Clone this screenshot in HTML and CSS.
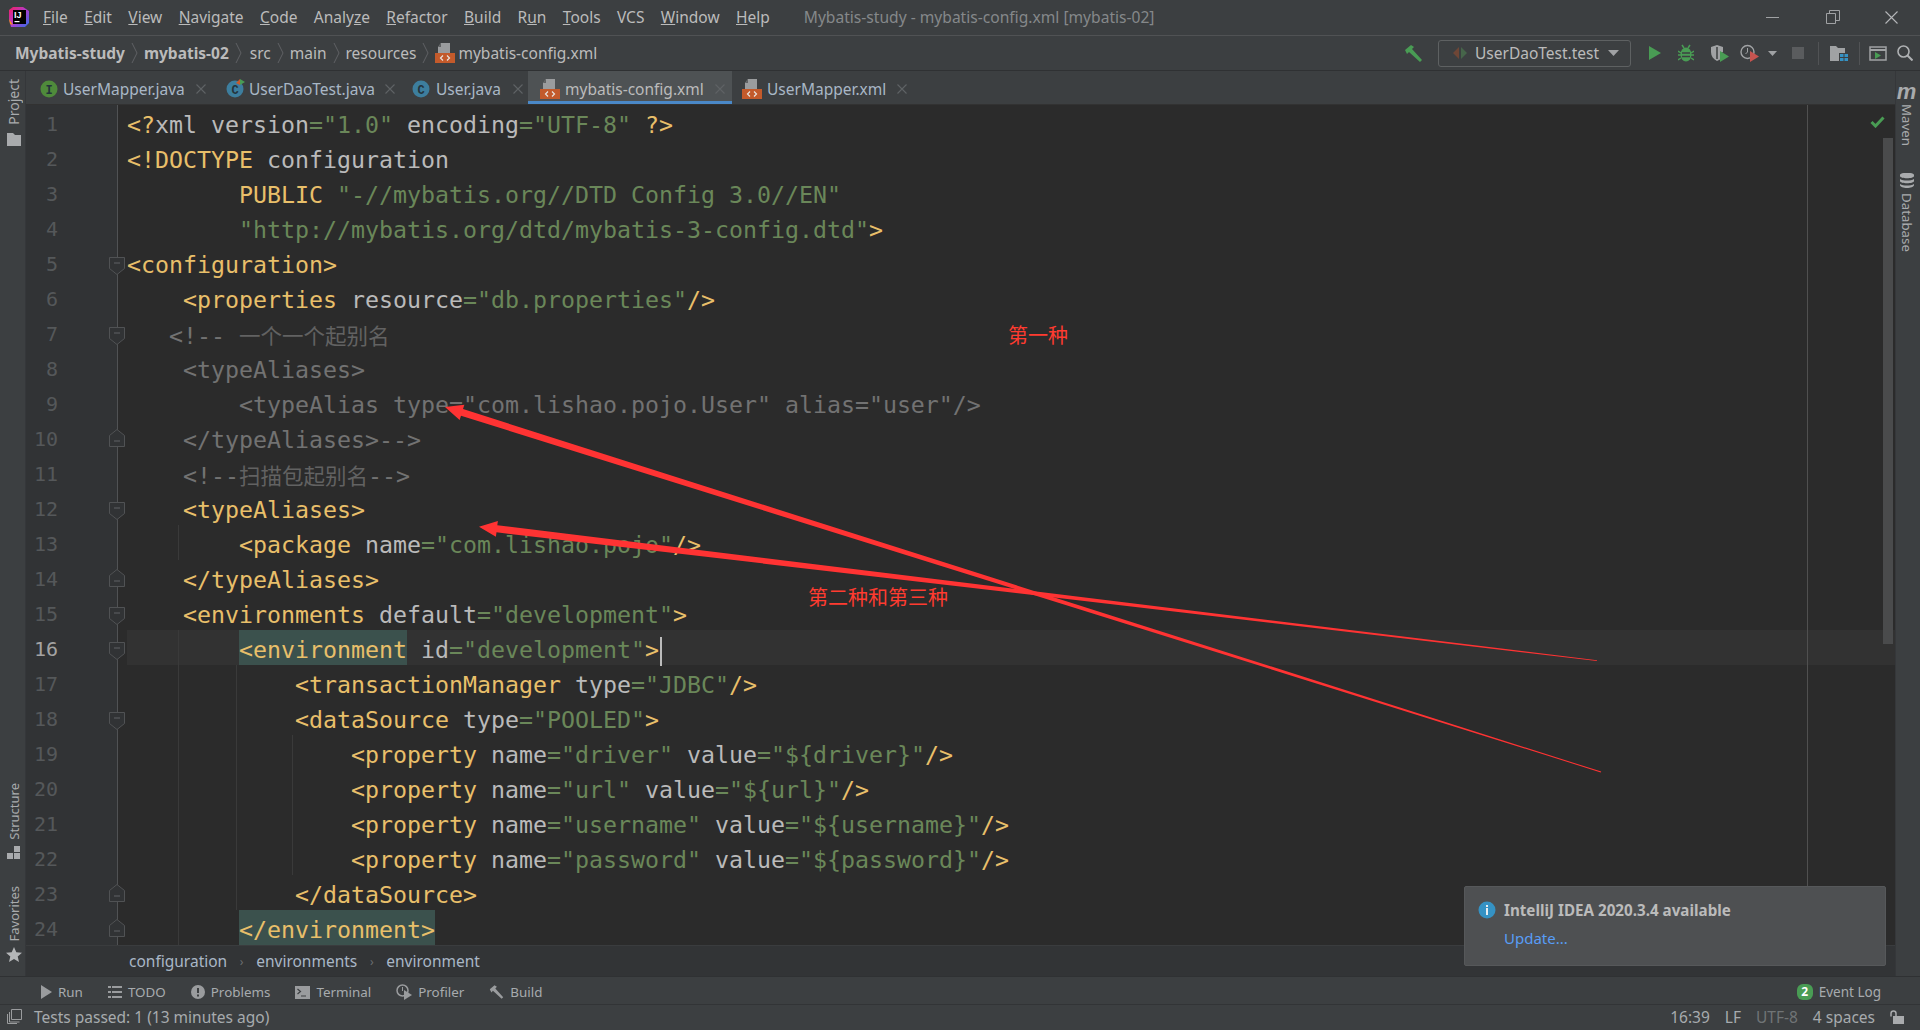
FILE: index.html
```html
<!DOCTYPE html>
<html lang="en">
<head>
    <meta charset="UTF-8">
    <title>Mybatis-study - mybatis-config.xml [mybatis-02]</title>
    <link rel="stylesheet" href="styles.css">
</head>
<body>
    <!-- Shared icons -->
    <svg class="defs" width="0" height="0">
        <symbol id="xml" viewBox="0 0 20 20">
            <path d="M6 0h9v10H3V4z" fill="#9a9c9e"/>
            <path d="M6 0v4H3z" fill="#5f6163"/>
            <rect y="10" width="20" height="10" fill="#c35a2b"/>
            <path d="M8 12.5 5.5 15 8 17.5M12 12.5l2.5 2.5-2.5 2.5" fill="none" stroke="#e9e4df" stroke-width="1.2"/>
        </symbol>
        <symbol id="x" viewBox="0 0 10 10">
            <path d="M.5.5l9 9M9.5.5l-9 9" stroke="#5f6365" stroke-width="1.1"/>
        </symbol>
        <symbol id="chev" viewBox="0 0 7 20">
            <path d="M1 0l5 10-5 10" fill="none" stroke="#5f6264"/>
        </symbol>
        <symbol id="fold-open" viewBox="0 0 16 18">
            <path d="M.5.5h15v11L8 17.5.5 11.5z" fill="#313335" stroke="#505254"/>
            <path d="M5 6h6" stroke="#606366"/>
        </symbol>
        <symbol id="fold-close" viewBox="0 0 16 18">
            <path d="M.5 17.5h15v-11L8 .5.5 6.5z" fill="#313335" stroke="#505254"/>
            <path d="M5 12h6" stroke="#606366"/>
        </symbol>
        <symbol id="hammer" viewBox="0 0 19 17">
            <path d="M1 5 7 0l3 2-2 2 10 11-2 2L5 7 3 9z" fill="currentColor"/>
        </symbol>
    </svg>

    <header class="title-bar">
        <svg class="logo" width="20" height="20" viewBox="0 0 20 20">
            <defs>
                <linearGradient id="logo-fill" x1="0" y1="0" x2="1" y2="1">
                    <stop offset="0" stop-color="#f5205f"/>
                    <stop offset=".5" stop-color="#b13bd0"/>
                    <stop offset="1" stop-color="#2f6fe8"/>
                </linearGradient>
            </defs>
            <path d="M4 0h10l6 4v12l-4 4H2L0 12V3z" fill="url(#logo-fill)"/>
            <path d="M0 12l4 6-3-1z" fill="#f7941d"/>
            <rect x="4" y="3" width="13" height="14" fill="#000"/>
            <text x="5" y="11" class="logo-text">IJ</text>
            <rect x="5.5" y="14" width="5" height="1.2" fill="#fff"/>
        </svg>
        <nav class="menu">
            <span><u>F</u>ile</span>
            <span><u>E</u>dit</span>
            <span><u>V</u>iew</span>
            <span><u>N</u>avigate</span>
            <span><u>C</u>ode</span>
            <span>Analy<u>z</u>e</span>
            <span><u>R</u>efactor</span>
            <span><u>B</u>uild</span>
            <span>R<u>u</u>n</span>
            <span><u>T</u>ools</span>
            <span>VCS</span>
            <span><u>W</u>indow</span>
            <span><u>H</u>elp</span>
        </nav>
        <div class="window-title">Mybatis-study - mybatis-config.xml [mybatis-02]</div>
        <div class="window-buttons">
            <svg width="13" height="13" viewBox="0 0 13 13"><path d="M0 6.5h13" stroke="#a0a2a4"/></svg>
            <svg width="14" height="14" viewBox="0 0 14 14"><path d="M.5 3.5h9v10h-9zM3.5 3.5v-3h10v10h-4" fill="none" stroke="#a0a2a4"/></svg>
            <svg width="13" height="13" viewBox="0 0 13 13"><path d="M.5.5l12 12M12.5.5l-12 12" stroke="#b5b7b9" stroke-width="1.1"/></svg>
        </div>
    </header>

    <div class="nav-bar">
        <div class="crumbs">
            <b>Mybatis-study</b><svg class="chev" width="7" height="20"><use href="#chev"/></svg>
            <b>mybatis-02</b><svg class="chev chev-wide" width="7" height="20"><use href="#chev"/></svg>
            <span>src</span><svg class="chev" width="7" height="20"><use href="#chev"/></svg>
            <span>main</span><svg class="chev" width="7" height="20"><use href="#chev"/></svg>
            <span>resources</span><svg class="chev" width="7" height="20"><use href="#chev"/></svg>
            <svg class="file-icon" width="20" height="20"><use href="#xml"/></svg>
            <span>mybatis-config.xml</span>
        </div>
        <div class="run-tools">
            <svg class="hammer" width="19" height="17"><use href="#hammer"/></svg>
            <div class="run-config">
                <svg width="14" height="12" viewBox="0 0 14 12"><path d="M6 0v12L0 6z" fill="#6e4636"/><path d="M8 0v12l6-6z" fill="#46654a"/></svg>
                <span>UserDaoTest.test</span>
                <svg width="11" height="6" viewBox="0 0 11 6"><path d="M0 0h11L5.5 6z" fill="#a0a2a4"/></svg>
            </div>
            <svg class="t-play" width="12" height="14" viewBox="0 0 12 14"><path d="M0 0l12 7-12 7z" fill="#499c54"/></svg>
            <svg class="t-bug" width="16" height="18" viewBox="0 0 16 18">
                <path d="M4 1l2 3M12 1l-2 3M0 7l3 2M16 7l-3 2M0 11h3M16 11h-3M0 16l3-2M16 16l-3-2" stroke="#499c54" stroke-width="1.5"/>
                <ellipse cx="8" cy="10.5" rx="5.5" ry="7" fill="#499c54"/>
                <path d="M4 9h8M4 12.5h8" stroke="#3c3f41" stroke-width="1.3"/>
            </svg>
            <svg class="t-cover" width="19" height="17" viewBox="0 0 19 17">
                <path d="M1 2l6-2 6 2v5l-2 1v6l-4 2c-4-2-6-5-6-9z" fill="#a0a2a4"/>
                <path d="M7 2v12" stroke="#3c3f41" stroke-width="1.5"/>
                <path d="M10 6l9 5.5-9 5.5z" fill="#499c54"/>
            </svg>
            <svg class="t-profile" width="19" height="18" viewBox="0 0 19 18">
                <circle cx="7.5" cy="8" r="6.5" fill="none" stroke="#a0a2a4" stroke-width="1.4"/>
                <path d="M7.5 4v4l-2 2" fill="none" stroke="#a0a2a4"/>
                <path d="M10 7l9 5.5-9 5.5z" fill="#c75450"/>
            </svg>
            <svg class="t-caret" width="9" height="5" viewBox="0 0 9 5"><path d="M0 0h9L4.5 5z" fill="#a0a2a4"/></svg>
            <div class="t-stop"></div>
            <div class="t-sep"></div>
            <svg class="t-folder" width="18" height="15" viewBox="0 0 18 15">
                <path d="M0 0h6l2 2h7v5H9v8H0z" fill="#a0a2a4"/>
                <path d="M10 8h3.5v3H10zM14.5 8H18v3h-3.5zM10 12h3.5v3H10zM14.5 12H18v3h-3.5z" fill="#3592c4"/>
            </svg>
            <div class="t-sep t-sep2"></div>
            <svg class="t-term" width="18" height="15" viewBox="0 0 18 15">
                <path d="M1 1h16v13H1z" fill="none" stroke="#a0a2a4" stroke-width="1.5"/>
                <path d="M1 4h16" stroke="#a0a2a4" stroke-width="2"/>
                <path d="M6 6l6 3.5-6 3.5z" fill="#499c54"/>
            </svg>
            <svg class="t-search" width="16" height="16" viewBox="0 0 16 16">
                <circle cx="6.5" cy="6.5" r="5.5" fill="none" stroke="#afb1b3" stroke-width="1.6"/>
                <path d="M10.5 10.5l5 5" stroke="#afb1b3" stroke-width="2"/>
            </svg>
        </div>
    </div>

    <div class="workspace">
        <aside class="stripe stripe-left">
            <div class="stripe-group stripe-top">
                <span class="vert project">Project</span>
                <svg width="14" height="13" viewBox="0 0 14 13"><path d="M0 0h6l2 2h6v11H0z" fill="#a9abad"/></svg>
            </div>
            <div class="stripe-group">
                <span class="vert">Structure</span>
                <svg width="13" height="13" viewBox="0 0 13 13"><path d="M7 0h6v6H7zM0 7h6v6H0zM7 7h6v6H7z" fill="#a9abad"/></svg>
                <span class="vert favorites">Favorites</span>
                <svg width="16" height="16" viewBox="0 0 16 16"><path d="M8 0l2.3 5.300 5.700.5-4.300 3.700 1.300 5.500L8 12.100 3 15l1.300-5.500L0 5.800l5.700-.5z" fill="#b4b6b8"/></svg>
            </div>
        </aside>

        <main class="center">
            <div class="tabs">
                <div class="tab tab-1">
                    <svg width="18" height="18" viewBox="0 0 18 18"><circle cx="9" cy="9" r="8.5" fill="#4f8b3b"/><text x="9" y="13.5" class="badge-text">I</text></svg>
                    <span>UserMapper.java</span>
                    <svg class="close" width="10" height="10"><use href="#x"/></svg>
                </div>
                <div class="tab tab-2">
                    <svg width="19" height="19" viewBox="0 0 19 19"><circle cx="9" cy="10" r="8.5" fill="#3d7e9e"/><text x="9" y="14.5" class="badge-text">C</text><path d="M10 4l4-4v6z" fill="#c75a2b"/><path d="M14 0l5 3-5 3z" fill="#499c54"/></svg>
                    <span>UserDaoTest.java</span>
                    <svg class="close" width="10" height="10"><use href="#x"/></svg>
                </div>
                <div class="tab tab-3">
                    <svg width="18" height="18" viewBox="0 0 18 18"><circle cx="9" cy="9" r="8.5" fill="#3d7e9e"/><text x="9" y="13.5" class="badge-text">C</text></svg>
                    <span>User.java</span>
                    <svg class="close" width="10" height="10"><use href="#x"/></svg>
                </div>
                <div class="tab tab-4 active">
                    <svg width="20" height="20"><use href="#xml"/></svg>
                    <span>mybatis-config.xml</span>
                    <svg class="close" width="10" height="10"><use href="#x"/></svg>
                </div>
                <div class="tab tab-5">
                    <svg width="20" height="20"><use href="#xml"/></svg>
                    <span>UserMapper.xml</span>
                    <svg class="close" width="10" height="10"><use href="#x"/></svg>
                </div>
            </div>

            <section class="editor">
                <div class="line"><div class="gutter">1</div><div class="code"><span class="t">&lt;?</span><span class="a">xml version</span><span class="v">="1.0"</span> <span class="a">encoding</span><span class="v">="UTF-8"</span> <span class="t">?&gt;</span></div></div>
                <div class="line"><div class="gutter">2</div><div class="code"><span class="t">&lt;!DOCTYPE</span> <span class="a">configuration</span></div></div>
                <div class="line"><div class="gutter">3</div><div class="code">        <span class="t">PUBLIC</span> <span class="v">"-//mybatis.org//DTD Config 3.0//EN"</span></div></div>
                <div class="line"><div class="gutter">4</div><div class="code">        <span class="v">"http://mybatis.org/dtd/mybatis-3-config.dtd"</span><span class="t">&gt;</span></div></div>
                <div class="line"><div class="gutter">5<svg class="fold open" width="16" height="18"><use href="#fold-open"/></svg></div><div class="code"><span class="t">&lt;configuration&gt;</span></div></div>
                <div class="line"><div class="gutter">6</div><div class="code">    <span class="t">&lt;properties</span> <span class="a">resource</span><span class="v">="db.properties"</span><span class="t">/&gt;</span></div></div>
                <div class="line"><div class="gutter">7<svg class="fold open" width="16" height="18"><use href="#fold-open"/></svg></div><div class="code">   <span class="c">&lt;!-- <span class="cjk">一个一个起别名</span></span></div></div>
                <div class="line"><div class="gutter">8</div><div class="code">    <span class="c">&lt;typeAliases&gt;</span></div></div>
                <div class="line"><div class="gutter">9</div><div class="code">        <span class="c">&lt;typeAlias type="com.lishao.pojo.User" alias="user"/&gt;</span></div></div>
                <div class="line"><div class="gutter">10<svg class="fold close-mark" width="16" height="18"><use href="#fold-close"/></svg></div><div class="code">    <span class="c">&lt;/typeAliases&gt;--&gt;</span></div></div>
                <div class="line"><div class="gutter">11</div><div class="code">    <span class="c">&lt;!--<span class="cjk">扫描包起别名</span>--&gt;</span></div></div>
                <div class="line"><div class="gutter">12<svg class="fold open" width="16" height="18"><use href="#fold-open"/></svg></div><div class="code">    <span class="t">&lt;typeAliases&gt;</span></div></div>
                <div class="line"><div class="gutter">13</div><div class="code">        <span class="t">&lt;package</span> <span class="a">name</span><span class="v">="com.lishao.pojo"</span><span class="t">/&gt;</span></div></div>
                <div class="line"><div class="gutter">14<svg class="fold close-mark" width="16" height="18"><use href="#fold-close"/></svg></div><div class="code">    <span class="t">&lt;/typeAliases&gt;</span></div></div>
                <div class="line"><div class="gutter">15<svg class="fold open" width="16" height="18"><use href="#fold-open"/></svg></div><div class="code">    <span class="t">&lt;environments</span> <span class="a">default</span><span class="v">="development"</span><span class="t">&gt;</span></div></div>
                <div class="line current"><div class="gutter">16<svg class="fold open" width="16" height="18"><use href="#fold-open"/></svg></div><div class="code">        <span class="t match">&lt;environment</span> <span class="a">id</span><span class="v">="development"</span><span class="t">&gt;</span><span class="caret"></span></div></div>
                <div class="line"><div class="gutter">17</div><div class="code">            <span class="t">&lt;transactionManager</span> <span class="a">type</span><span class="v">="JDBC"</span><span class="t">/&gt;</span></div></div>
                <div class="line"><div class="gutter">18<svg class="fold open" width="16" height="18"><use href="#fold-open"/></svg></div><div class="code">            <span class="t">&lt;dataSource</span> <span class="a">type</span><span class="v">="POOLED"</span><span class="t">&gt;</span></div></div>
                <div class="line"><div class="gutter">19</div><div class="code">                <span class="t">&lt;property</span> <span class="a">name</span><span class="v">="driver"</span> <span class="a">value</span><span class="v">="${driver}"</span><span class="t">/&gt;</span></div></div>
                <div class="line"><div class="gutter">20</div><div class="code">                <span class="t">&lt;property</span> <span class="a">name</span><span class="v">="url"</span> <span class="a">value</span><span class="v">="${url}"</span><span class="t">/&gt;</span></div></div>
                <div class="line"><div class="gutter">21</div><div class="code">                <span class="t">&lt;property</span> <span class="a">name</span><span class="v">="username"</span> <span class="a">value</span><span class="v">="${username}"</span><span class="t">/&gt;</span></div></div>
                <div class="line"><div class="gutter">22</div><div class="code">                <span class="t">&lt;property</span> <span class="a">name</span><span class="v">="password"</span> <span class="a">value</span><span class="v">="${password}"</span><span class="t">/&gt;</span></div></div>
                <div class="line"><div class="gutter">23<svg class="fold close-mark" width="16" height="18"><use href="#fold-close"/></svg></div><div class="code">            <span class="t">&lt;/dataSource&gt;</span></div></div>
                <div class="line"><div class="gutter">24<svg class="fold close-mark" width="16" height="18"><use href="#fold-close"/></svg></div><div class="code">        <span class="t match">&lt;/environment&gt;</span></div></div>

                <!-- Indent guides, margin, inspection mark, scrollbar -->
                <div class="guide guide-a"></div>
                <div class="guide guide-b"></div>
                <div class="guide guide-c"></div>
                <div class="guide guide-d"></div>
                <div class="margin-line"></div>
                <svg class="check" width="15" height="12" viewBox="0 0 15 12"><path d="M1.5 6l4 4 8-8.5" fill="none" stroke="#499c54" stroke-width="3"/></svg>
                <div class="scroll-thumb"></div>
            </section>

            <div class="breadcrumbs">
                <span>configuration</span><i>›</i>
                <span>environments</span><i>›</i>
                <span>environment</span>
            </div>
        </main>

        <aside class="stripe stripe-right">
            <span class="maven-m">m</span>
            <span class="vert-r">Maven</span>
            <svg class="db-icon" width="14" height="15" viewBox="0 0 14 15"><path d="M0 2c0-3 14-3 14 0v1c0 3-14 3-14 0zM0 6c3 2 11 2 14 0v2c0 3-14 3-14 0zM0 11c3 2 11 2 14 0v1c0 4-14 4-14 0z" fill="#a9abad"/></svg>
            <span class="vert-r">Database</span>
        </aside>
    </div>

    <div class="tool-bar">
        <div class="tool-group">
            <div class="tool"><svg width="11" height="14" viewBox="0 0 11 14"><path d="M0 0l11 7-11 7z" fill="#9a9c9e"/></svg><span>Run</span></div>
            <div class="tool"><svg width="14" height="12" viewBox="0 0 14 12"><path d="M0 0h3v2H0zM4 0h10v2H4zM0 5h3v2H0zM4 5h10v2H4zM0 10h3v2H0zM4 10h10v2H4z" fill="#9a9c9e"/></svg><span>TODO</span></div>
            <div class="tool"><svg width="14" height="14" viewBox="0 0 14 14"><circle cx="7" cy="7" r="7" fill="#9a9c9e"/><path d="M6 3h2v5H6zM6 9.5h2v2H6z" fill="#3c3f41"/></svg><span>Problems</span></div>
            <div class="tool"><svg width="15" height="13" viewBox="0 0 15 13"><rect width="15" height="13" fill="#9a9c9e"/><path d="M2.5 3l3 2.5-3 2.5M6 10h5" fill="none" stroke="#3c3f41" stroke-width="1.2"/></svg><span>Terminal</span></div>
            <div class="tool"><svg width="16" height="16" viewBox="0 0 16 16"><circle cx="6.5" cy="6.5" r="5.5" fill="none" stroke="#9a9c9e" stroke-width="1.5"/><path d="M6.5 3v4" stroke="#9a9c9e"/><path d="M8 6l8 5-8 5z" fill="#9a9c9e"/></svg><span>Profiler</span></div>
            <div class="tool"><svg class="hammer-gray" width="15" height="14"><use href="#hammer"/></svg><span>Build</span></div>
        </div>
        <div class="event-log">
            <span class="event-badge">2</span>
            <span>Event Log</span>
        </div>
    </div>

    <footer class="status-bar">
        <svg width="15" height="15" viewBox="0 0 15 15"><path d="M4.5.5h10v10h-10z" fill="none" stroke="#9a9c9e"/><path d="M2.5 3v10h10M.5 5v9.5H10" fill="none" stroke="#9a9c9e"/></svg>
        <span class="status-msg">Tests passed: 1 (13 minutes ago)</span>
        <div class="status-right">
            <span>16:39</span>
            <span>LF</span>
            <span class="s-enc">UTF-8</span>
            <span>4 spaces</span>
            <svg width="14" height="14" viewBox="0 0 14 14"><path d="M1 6.5V3.5a2.5 2.5 0 0 1 5 0V6" fill="none" stroke="#a9abad" stroke-width="1.5"/><rect x="3" y="6" width="11" height="8" fill="#a9abad"/></svg>
        </div>
    </footer>

    <!-- Update popup and the red notes drawn over the screenshot -->
    <div class="notification">
        <svg width="18" height="18" viewBox="0 0 18 18"><circle cx="9" cy="9" r="8.5" fill="#3592c4"/><path d="M8 7h2v7H8zM8 4h2v2H8z" fill="#e8eef2"/></svg>
        <div>
            <div class="notification-title">IntelliJ IDEA 2020.3.4 available</div>
            <a class="notification-link">Update...</a>
        </div>
    </div>

    <svg class="arrows" width="1920" height="1030">
        <polygon points="445,407 464.4,404.8 463,409.1 1601.2,771.6 1600.8,772.4 461,415.7 459.6,420" fill="#ff3333"/>
        <polygon points="479,526.7 497.9,520.9 497.3,525.3 1597,660.3 1596.9,661.1 496.5,532.3 495.9,536.7" fill="#ff3333"/>
    </svg>
    <span class="note note-one">第一种</span>
    <span class="note note-two">第二种和第三种</span>
</body>
</html>
```

FILE: styles.css
```css
/* Reset */
* {
    box-sizing: border-box;
}

body {
    margin: 0;
    width: 1920px;
    height: 1030px;
    overflow: hidden;
    position: relative;
    display: flex;
    flex-direction: column;
    background-color: #3c3f41;
    color: #bbbbbb;
    font-family: "Noto Sans", Arial, sans-serif;
    font-size: 15px;
}

svg {
    display: block;
    flex-shrink: 0;
}

.defs {
    position: absolute;
}

/* Title bar */
.title-bar {
    height: 36px;
    display: flex;
    align-items: center;
    border-bottom: 1px solid #505254;
}

.logo {
    margin-left: 9px;
}

.logo-text {
    font-family: "Liberation Sans", sans-serif;
    font-size: 9px;
    font-weight: bold;
    fill: #fff;
}

.menu {
    display: flex;
    gap: 16.4px;
    margin-left: 14px;
    font-size: 15.5px;
    color: #bbbbbb;
}

.window-title {
    margin-left: 34px;
    font-size: 15.6px;
    color: #85888a;
}

.window-buttons {
    margin-left: auto;
    display: flex;
    align-items: center;
    gap: 45px;
    padding-right: 22px;
}

.window-buttons svg:first-child {
    margin-right: 2px;
}

/* Navigation bar */
.nav-bar {
    height: 36px;
    display: flex;
    align-items: center;
    justify-content: space-between;
    border-bottom: 1px solid #2f3133;
    padding-left: 15px;
}

.crumbs {
    display: flex;
    align-items: center;
    font-size: 15.5px;
}

.crumbs b {
    font-weight: 700;
}

.chev {
    margin: 0 6px;
}

.chev-wide {
    margin-right: 8px;
}

.file-icon {
    margin-right: 3px;
}

.run-tools {
    display: flex;
    align-items: center;
    padding-right: 7px;
}

.hammer {
    color: #499c54;
}

.run-config {
    width: 193px;
    height: 27px;
    margin-left: 15px;
    display: flex;
    align-items: center;
    padding: 0 12px 0 14px;
    border: 1px solid #5e6162;
    border-radius: 3px;
}

.run-config span {
    margin-left: 8px;
    margin-right: 9px;
    font-size: 15.5px;
    white-space: nowrap;
}

.t-play { margin-left: 18px; }
.t-bug { margin-left: 17px; }
.t-cover { margin-left: 16px; }
.t-profile { margin-left: 11px; }
.t-caret { margin-left: 9px; }
.t-folder { margin-left: 11px; }
.t-term { margin-left: 9px; }
.t-search { margin-left: 10px; }

.t-stop {
    width: 12px;
    height: 12px;
    margin-left: 15px;
    background-color: #5a5c5e;
}

.t-sep {
    width: 1px;
    height: 23px;
    margin-left: 14px;
    background-color: #515355;
}

.t-sep2 {
    margin-left: 11px;
}

/* Main area */
.workspace {
    height: 905px;
    display: flex;
}

.stripe {
    flex-shrink: 0;
    display: flex;
    flex-direction: column;
    align-items: center;
}

.stripe-left {
    width: 26px;
    justify-content: space-between;
    padding: 8px 0 13px 2px;
    border-right: 1px solid #35373a;
}

.stripe-group {
    display: flex;
    flex-direction: column;
    align-items: center;
    gap: 6px;
}

.stripe-top {
    gap: 8px;
}

.vert {
    writing-mode: vertical-rl;
    transform: rotate(180deg);
    font-size: 13px;
    line-height: 18px;
    color: #a9abad;
}

.project {
    font-size: 14px;
}

.favorites {
    margin-top: 21px;
}

.center {
    width: 1869px;
    display: flex;
    flex-direction: column;
}

.stripe-right {
    width: 25px;
    padding: 9px 3px 0 0;
    border-left: 1px solid #35373a;
}

.maven-m {
    font-family: "Liberation Sans", sans-serif;
    font-size: 22px;
    font-weight: bold;
    font-style: italic;
    line-height: 24px;
    color: #a9abad;
}

.vert-r {
    writing-mode: vertical-rl;
    font-size: 13.3px;
    line-height: 18px;
    color: #a9abad;
}

.db-icon {
    margin: 27px 0 5px;
}

/* Tabs */
.tabs {
    height: 34px;
    display: flex;
    border-bottom: 1px solid #323232;
    font-size: 15.5px;
    color: #a9b7c6;
}

.tab {
    height: 33px;
    display: flex;
    align-items: center;
    padding-top: 2px;
    white-space: nowrap;
}

.tab-1 { width: 192px; padding-left: 14px; gap: 5px; }
.tab-2 { width: 186px; padding-left: 8px; gap: 4px; }
.tab-3 { width: 124px; padding-left: 8px; gap: 6px; }
.tab-4 { width: 204px; padding-left: 12px; gap: 5px; }
.tab-5 { width: 190px; padding-left: 10px; gap: 5px; }

.tab .close {
    margin-left: 6px;
}

.tab.active {
    background-color: #4e5254;
    box-shadow: inset 0 -3px 0 #4a88c7;
    color: #bbbbbb;
}

.badge-text {
    font-family: "Liberation Mono", monospace;
    font-size: 12px;
    font-weight: bold;
    text-anchor: middle;
    fill: #24343c;
}

/* Editor */
.editor {
    height: 840px;
    position: relative;
    background-color: #2b2b2b;
    font-family: "DejaVu Sans Mono", "Noto Sans CJK SC", monospace;
    font-size: 23.25px;
    color: #bababa;
}

.line {
    height: 35px;
    display: flex;
    line-height: 39px;
    white-space: pre;
}

.gutter {
    width: 92px;
    flex-shrink: 0;
    position: relative;
    padding-right: 59px;
    text-align: right;
    background-color: #313335;
    border-right: 1px solid #505254;
    font-size: 20px;
    color: #55585a;
}

.current .gutter {
    color: #a4a3a3;
}

.code {
    flex: 1;
    margin-left: 9px;
}

.current .code {
    background-color: #323232;
}

.t { color: #e8bf6a; }
.a { color: #bababa; }
.v { color: #6a8759; }
.c { color: #727272; }

.cjk {
    font-family: "Noto Sans CJK SC", sans-serif;
    font-size: 21.5px;
    color: #626262;
}

.match {
    display: inline-block;
    padding-top: 4px;
    line-height: 31px;
    background-color: #3b514d;
}

.caret {
    display: inline-block;
    width: 2px;
    height: 29px;
    margin-left: 1px;
    vertical-align: middle;
    background-color: #bbbbbb;
}

.fold {
    position: absolute;
    left: 83px;
}

.fold.open { top: 12px; }
.fold.close-mark { top: 9px; }

.guide {
    position: absolute;
    width: 1px;
    background-color: #3a3a3a;
}

.guide-a { left: 152px; top: 420px; height: 35px; }
.guide-b { left: 152px; top: 525px; height: 315px; }
.guide-c { left: 210px; top: 560px; height: 245px; }
.guide-d { left: 266px; top: 630px; height: 140px; }

.margin-line {
    position: absolute;
    left: 1781px;
    top: 0;
    width: 1px;
    height: 840px;
    background-color: #505050;
}

.check {
    position: absolute;
    left: 1844px;
    top: 11px;
}

.scroll-thumb {
    position: absolute;
    left: 1857px;
    top: 33px;
    width: 10px;
    height: 506px;
    background-color: #4a4b4c;
}

/* Breadcrumbs under the editor */
.breadcrumbs {
    height: 31px;
    display: flex;
    align-items: center;
    padding-left: 103px;
    background-color: #323436;
    border-top: 1px solid #3a3c3e;
    font-size: 15.5px;
    color: #a9b7c6;
}

.breadcrumbs i {
    width: 29px;
    text-align: center;
    font-style: normal;
    font-size: 12px;
    color: #6b6e70;
}

/* Tool window bar */
.tool-bar {
    height: 28px;
    display: flex;
    align-items: center;
    justify-content: space-between;
    padding: 3px 39px 0 41px;
    border-top: 1px solid #2f3133;
    font-size: 13.4px;
    color: #a7abae;
}

.tool-group {
    display: flex;
    gap: 25px;
}

.tool {
    display: flex;
    align-items: center;
    gap: 6px;
}

.hammer-gray {
    color: #9a9c9e;
}

.event-log {
    display: flex;
    align-items: center;
    gap: 6px;
    font-size: 13.5px;
}

.event-badge {
    width: 16px;
    height: 16px;
    border-radius: 6px;
    background-color: #499c54;
    color: #fff;
    font-size: 12px;
    font-weight: bold;
    line-height: 16px;
    text-align: center;
}

/* Status bar */
.status-bar {
    height: 26px;
    display: flex;
    align-items: center;
    padding: 0 16px 2px 7px;
    border-top: 1px solid #323436;
    font-size: 15.5px;
    color: #a7abae;
}

.status-msg {
    margin-left: 12px;
}

.status-right {
    margin-left: auto;
    display: flex;
    align-items: center;
    gap: 15px;
}

.s-enc {
    color: #707476;
}

/* Notification */
.notification {
    position: absolute;
    left: 1464px;
    top: 886px;
    width: 422px;
    height: 80px;
    display: flex;
    gap: 8px;
    padding: 14px 0 0 13px;
    background-color: #4e5052;
    border: 1px solid #56585a;
    border-radius: 2px;
}

.notification-title {
    font-size: 15.2px;
    font-weight: 700;
    line-height: 18px;
}

.notification-link {
    display: block;
    margin-top: 9px;
    font-size: 15px;
    line-height: 20px;
    color: #589df6;
}

/* Red annotations */
.arrows {
    position: absolute;
    left: 0;
    top: 0;
}

.note {
    position: absolute;
    font-family: "Noto Sans CJK SC", sans-serif;
    font-size: 20px;
    line-height: 24px;
    color: #ff3b30;
}

.note-one { left: 1008px; top: 323px; }
.note-two { left: 808px; top: 585px; }
```
